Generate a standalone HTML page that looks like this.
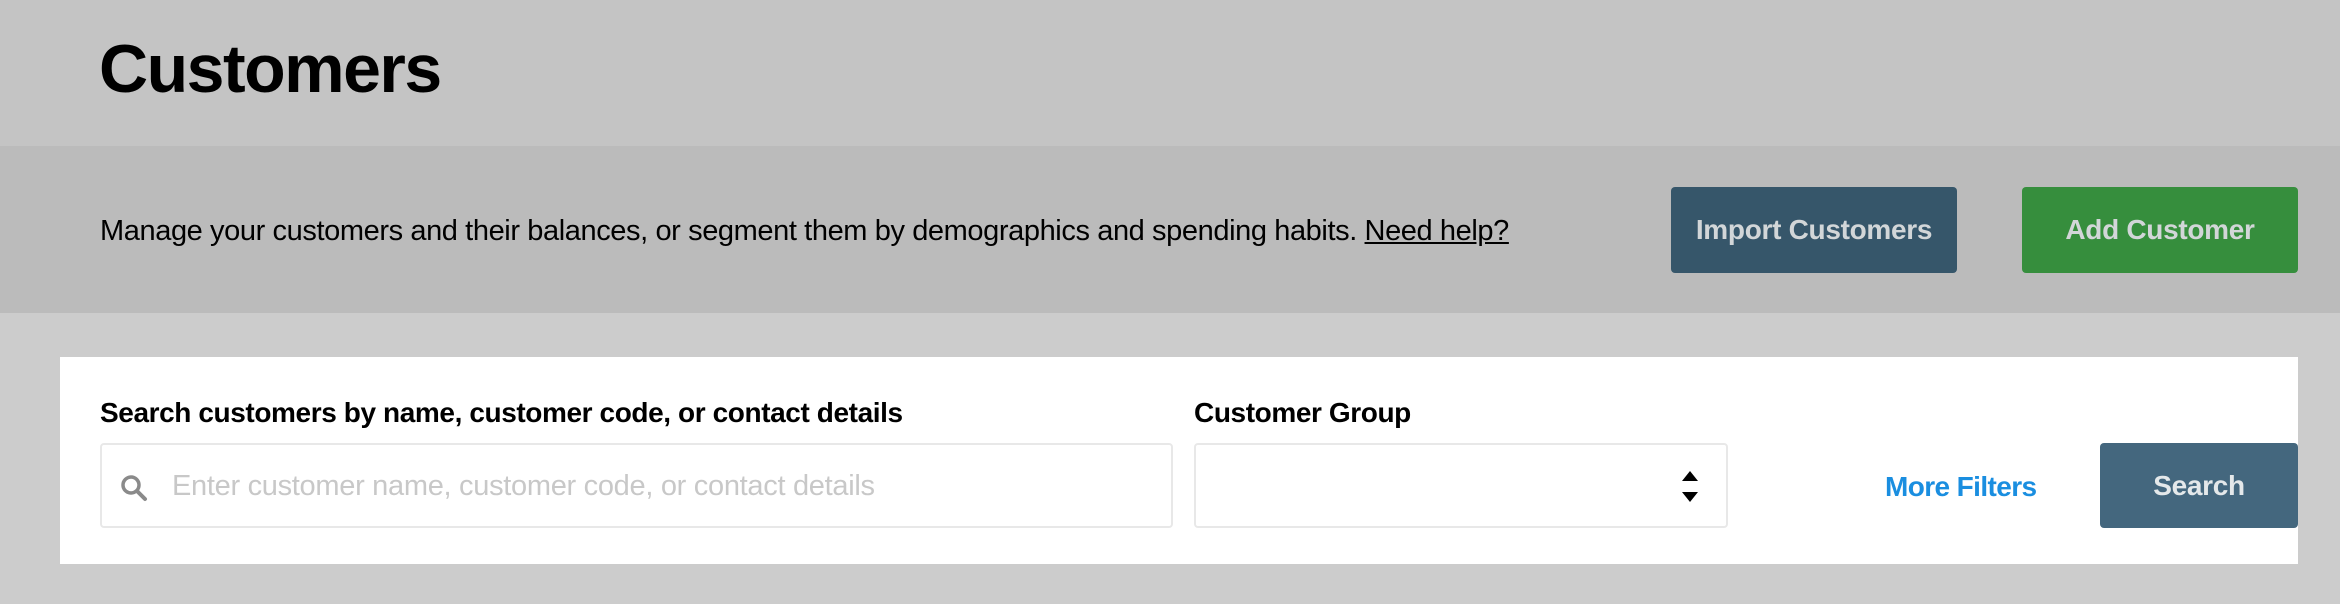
<!DOCTYPE html>
<html><head><meta charset="utf-8"><style>
*{margin:0;padding:0;box-sizing:border-box}
body{width:2340px;height:604px;background:#cccccc;font-family:"Liberation Sans",sans-serif;position:relative;overflow:hidden}
.a{position:absolute;white-space:nowrap}
.top{left:0;top:0;width:2340px;height:146px;background:#c4c4c4}
.band{left:0;top:146px;width:2340px;height:167px;background:#bbbbbb}
.card{left:60px;top:357px;width:2238px;height:207px;background:#fff}
.btn{border-radius:4px;color:#d2d6d8;font-size:28px;font-weight:bold;display:flex;align-items:center;justify-content:center;letter-spacing:-0.3px}
.box{border:2px solid #e8e8e8;border-radius:4px;background:#fff}
</style></head><body>
<div class="a top"></div>
<div class="a band"></div>
<div class="a" style="left:99px;top:30px;font-size:68px;font-weight:bold;color:#000;letter-spacing:-1.5px">Customers</div>
<div class="a" style="left:100px;top:215px;font-size:29px;color:#000;letter-spacing:-0.4px">Manage your customers and their balances, or segment them by demographics and spending habits. <span style="text-decoration:underline">Need help?</span></div>
<div class="a btn" style="left:1671px;top:187px;width:286px;height:86px;background:#36566a">Import Customers</div>
<div class="a btn" style="left:2022px;top:187px;width:276px;height:86px;background:#368e3d">Add Customer</div>
<div class="a card"></div>
<div class="a" style="left:100px;top:397px;font-size:28px;font-weight:bold;color:#000;letter-spacing:-0.4px">Search customers by name, customer code, or contact details</div>
<div class="a box" style="left:100px;top:443px;width:1073px;height:85px"></div>
<svg class="a" style="left:120px;top:474px" width="28" height="28" viewBox="0 0 28 28"><circle cx="11" cy="11" r="8" fill="none" stroke="#8a8a8a" stroke-width="3.5"/><path d="M17 17 L25 25" stroke="#8a8a8a" stroke-width="4" stroke-linecap="round"/></svg>
<div class="a" style="left:172px;top:470px;font-size:29px;color:#c8c8c8;letter-spacing:-0.3px">Enter customer name, customer code, or contact details</div>
<div class="a" style="left:1194px;top:397px;font-size:28px;font-weight:bold;color:#000;letter-spacing:-0.4px">Customer Group</div>
<div class="a box" style="left:1194px;top:443px;width:534px;height:85px"></div>
<svg class="a" style="left:1680px;top:470px" width="20" height="34" viewBox="0 0 20 34"><path d="M10 1 L18 11 L2 11Z M2 22 L18 22 L10 32Z" fill="#000"/></svg>
<div class="a" style="left:1885px;top:471px;font-size:28px;font-weight:bold;color:#1a8ee0;letter-spacing:-0.6px">More Filters</div>
<div class="a btn" style="left:2100px;top:443px;width:198px;height:85px;background:#44677e;color:#e4e8ea">Search</div>
</body></html>
